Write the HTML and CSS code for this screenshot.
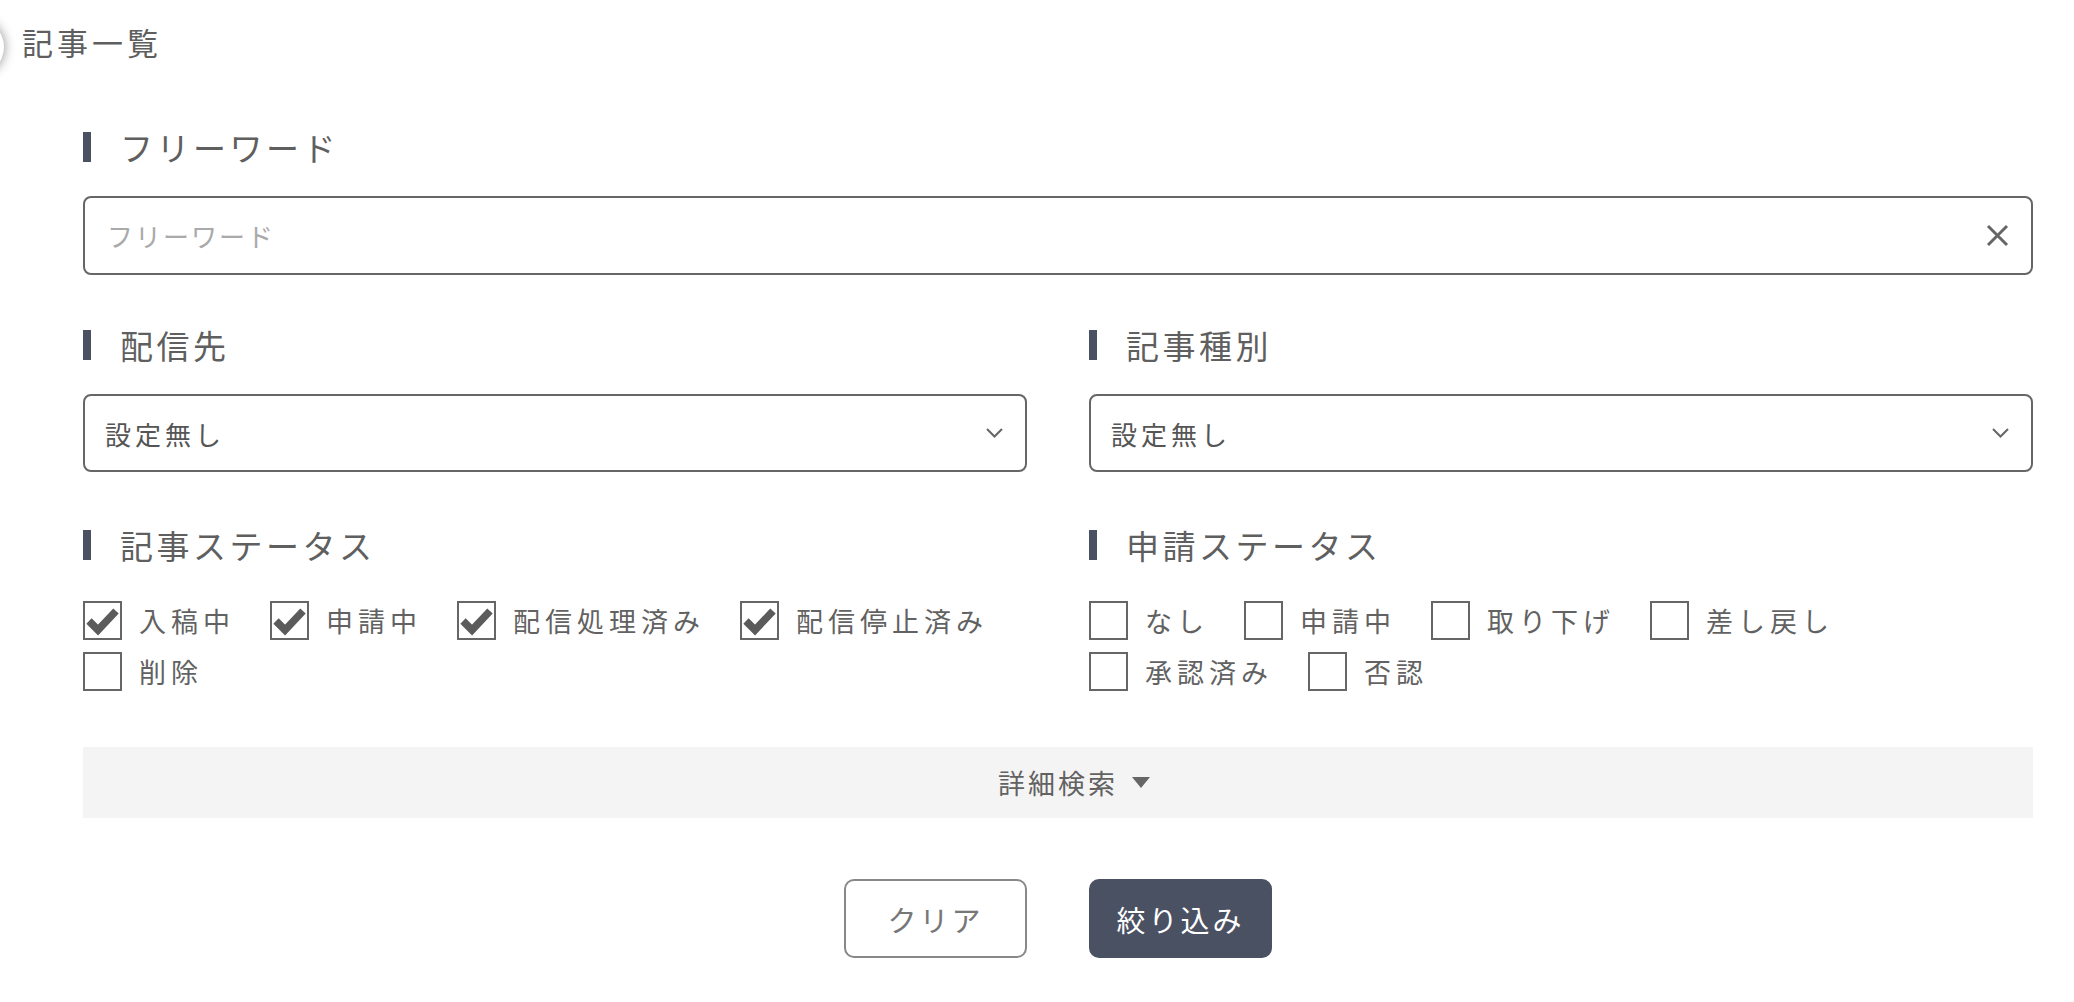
FILE: index.html
```html
<!DOCTYPE html>
<html lang="ja">
<head>
<meta charset="UTF-8">
<meta name="viewport" content="width=device-width, initial-scale=1.0">
<title>記事一覧</title>
<link rel="stylesheet" href="styles.css">
</head>
<body>
  <header class="page-header">
    <span class="menu-knob"></span>
    <h1>記事一覧</h1>
  </header>

  <main class="search">
    <div class="field">
      <h2 class="field-title">フリーワード</h2>
      <div class="text-input">
        <span class="placeholder">フリーワード</span>
        <svg class="clear-icon" width="23" height="23" viewBox="0 0 23 23">
          <path d="M2 2 L21 21 M21 2 L2 21" stroke="#666" stroke-width="3" fill="none"/>
        </svg>
      </div>
    </div>

    <div class="columns">
      <div class="field">
        <h2 class="field-title">配信先</h2>
        <div class="select">
          <span>設定無し</span>
          <svg width="17" height="10" viewBox="0 0 17 10">
            <path d="M1 1 L8.5 8.5 L16 1" stroke="#666" stroke-width="2" fill="none"/>
          </svg>
        </div>
      </div>
      <div class="field">
        <h2 class="field-title">記事種別</h2>
        <div class="select">
          <span>設定無し</span>
          <svg width="17" height="10" viewBox="0 0 17 10">
            <path d="M1 1 L8.5 8.5 L16 1" stroke="#666" stroke-width="2" fill="none"/>
          </svg>
        </div>
      </div>
    </div>

    <div class="columns">
      <div class="field status">
        <h2 class="field-title">記事ステータス</h2>
        <div class="checks">
          <label class="check"><span class="box"><svg viewBox="0 0 35 35"><polyline points="4,18 13,27 31,8" /></svg></span>入稿中</label>
          <label class="check"><span class="box"><svg viewBox="0 0 35 35"><polyline points="4,18 13,27 31,8" /></svg></span>申請中</label>
          <label class="check"><span class="box"><svg viewBox="0 0 35 35"><polyline points="4,18 13,27 31,8" /></svg></span>配信処理済み</label>
          <label class="check"><span class="box"><svg viewBox="0 0 35 35"><polyline points="4,18 13,27 31,8" /></svg></span>配信停止済み</label>
          <label class="check"><span class="box"></span>削除</label>
        </div>
      </div>
      <div class="field status">
        <h2 class="field-title">申請ステータス</h2>
        <div class="checks">
          <label class="check"><span class="box"></span>なし</label>
          <label class="check"><span class="box"></span>申請中</label>
          <label class="check"><span class="box"></span>取り下げ</label>
          <label class="check"><span class="box"></span>差し戻し</label>
          <label class="check"><span class="box"></span>承認済み</label>
          <label class="check"><span class="box"></span>否認</label>
        </div>
      </div>
    </div>

    <div class="detail-toggle">
      <span>詳細検索</span>
      <span class="triangle"></span>
    </div>

    <div class="actions">
      <button class="btn btn-clear" type="button">クリア</button>
      <button class="btn btn-submit" type="button">絞り込み</button>
    </div>
  </main>
</body>
</html>
```

FILE: styles.css
```css
body {
  margin: 0;
  font-family: "Noto Sans CJK JP", sans-serif;
  color: #626262;
  background: #fff;
}

/* header */
.page-header {
  position: relative;
  height: 82px;
  display: flex;
  align-items: center;
  padding-left: 22px;
  overflow: hidden;
}

.page-header h1 {
  margin: 0;
  font-size: 31px;
  font-weight: 400;
  letter-spacing: 4px;
  color: #5f5f5f;
}

.menu-knob {
  position: absolute;
  left: -52px;
  top: 19px;
  width: 56px;
  height: 56px;
  border-radius: 50%;
  background: #fff;
  box-shadow: 0 0 12px rgba(0, 0, 0, 0.45);
}

/* search form */
.search {
  width: 1950px;
  margin-left: 83px;
  padding-top: 45px;
}

.field {
  margin-bottom: 50px;
}

.field-title {
  display: flex;
  align-items: center;
  height: 40px;
  margin: 0 0 29px;
  font-size: 33px;
  font-weight: 400;
  letter-spacing: 3.5px;
  color: #5f5f5f;
}

.field-title::before {
  content: "";
  width: 8px;
  height: 30px;
  margin-right: 29px;
  background: #4a5163;
}

.text-input {
  height: 79px;
  box-sizing: border-box;
  border: 2px solid #666;
  border-radius: 8px;
  display: flex;
  align-items: center;
  justify-content: space-between;
  padding: 0 22px;
}

.placeholder {
  font-size: 26px;
  letter-spacing: 2px;
  color: #aaa;
}

.columns {
  display: grid;
  grid-template-columns: 1fr 1fr;
  column-gap: 62px;
}

.columns .field {
  margin-bottom: 53px;
}

.columns .status {
  margin-bottom: 56px;
}

.select {
  height: 78px;
  box-sizing: border-box;
  border: 2px solid #666;
  border-radius: 8px;
  display: flex;
  align-items: center;
  justify-content: space-between;
  padding: 0 22px 0 20px;
  font-size: 26px;
  letter-spacing: 4px;
  color: #555;
}

/* checkboxes */
.checks {
  display: flex;
  flex-wrap: wrap;
  column-gap: 35px;
  row-gap: 12px;
  margin-top: 36px;
}

.check {
  display: flex;
  align-items: center;
  gap: 17px;
  height: 39px;
  font-size: 27px;
  letter-spacing: 5px;
  color: #626262;
}

.box {
  width: 39px;
  height: 39px;
  box-sizing: border-box;
  border: 2px solid #666;
  background: #fff;
}

.box svg {
  display: block;
  width: 35px;
  height: 35px;
}

.box polyline {
  fill: none;
  stroke: #5b5b5b;
  stroke-width: 7.5;
  stroke-linejoin: miter;
}

/* detail search */
.detail-toggle {
  height: 71px;
  background: #f4f4f4;
  display: flex;
  align-items: center;
  justify-content: center;
  font-size: 27px;
  letter-spacing: 3px;
  color: #626262;
}

.triangle {
  width: 0;
  height: 0;
  border-left: 9px solid transparent;
  border-right: 9px solid transparent;
  border-top: 11px solid #666;
  margin-left: 14px;
  margin-right: -32px;
}

/* buttons */
.actions {
  display: flex;
  justify-content: center;
  gap: 62px;
  margin-top: 61px;
}

.btn {
  width: 183px;
  height: 79px;
  border-radius: 10px;
  font-family: "Noto Sans CJK JP", sans-serif;
  font-size: 29px;
  letter-spacing: 3px;
  cursor: pointer;
}

.btn-clear {
  background: #fff;
  border: 2px solid #888;
  color: #777;
}

.btn-submit {
  background: #4a5163;
  border: none;
  color: #fff;
}
```
